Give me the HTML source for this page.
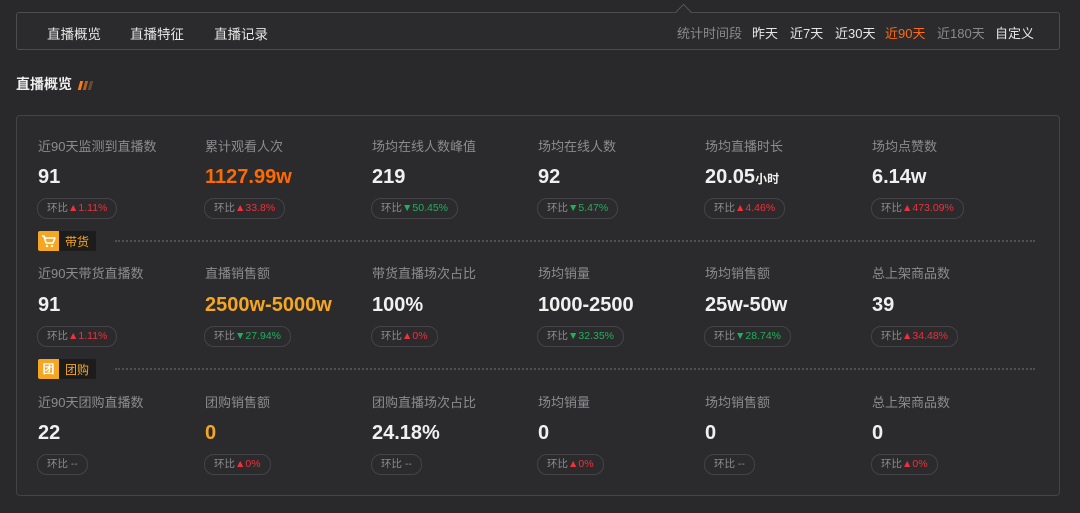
<!DOCTYPE html>
<html><head><meta charset="utf-8"><style>
*{margin:0;padding:0;box-sizing:border-box}
body{width:1080px;height:513px;background:#29292b;font-family:"Liberation Sans","Noto Sans CJK SC",sans-serif;position:relative;overflow:hidden;color:#e8e8e8}
.nav{position:absolute;left:16px;top:12px;width:1044px;height:38px;border:1px solid #4c4c4f;border-radius:3px;background:#2b2b2d}
.nav .l{position:absolute;top:10px;font-size:13.5px;color:#e6e6e6}
.nav .r{position:absolute;top:10px;font-size:13px}
.caret{position:absolute;left:661px;top:-7px;width:11px;height:11px;border-left:1.5px solid #55555a;border-top:1.5px solid #55555a;background:#2b2b2d;transform:rotate(45deg)}
.title{position:absolute;left:16px;top:74px;font-size:14px;font-weight:bold;color:#eee}
.bars{position:absolute;left:79px;top:77px}
.bars i{display:inline-block;width:3px;height:9px;margin-right:2px;transform:skewX(-15deg)}
.card{position:absolute;left:16px;top:115px;width:1044px;height:381px;border:1px solid #444447;border-radius:4px;background:#2b2b2d}
.lab{position:absolute;font-size:13px;color:#8c8c8f}
.val{position:absolute;font-size:20px;font-weight:bold;color:#f0f0f0}
.val small{font-size:12px}
.bdg{position:absolute;height:21px;border:1px solid #444447;border-radius:10px;font-size:10.5px;color:#8c8c8f;line-height:19px;padding:0 9px;white-space:nowrap}
.up{color:#f0303a}.dn{color:#1fb05a}
.tag{position:absolute;left:38px;width:58px;height:20px;background:#1c1c1d;border-radius:2px}
.tag b{position:absolute;left:0;top:0;width:21px;height:20px;background:#f5a623;border-radius:2px 0 0 2px;color:#fff;font-size:12px;text-align:center;line-height:20px}
.tag b svg{position:absolute;left:3px;top:3px}
.tag span{position:absolute;left:27px;top:2px;font-size:12px;color:#f5a623}
.dash{position:absolute;left:115px;width:920px;border-top:2px dotted #505053}
</style></head><body>
<div class="nav">
<div class="caret"></div>
<span class="l" style="left:30px">直播概览</span>
<span class="l" style="left:113px">直播特征</span>
<span class="l" style="left:197px">直播记录</span>
<span class="r" style="left:660px;color:#8a8a8d">统计时间段</span>
<span class="r" style="left:735px;color:#e6e6e6">昨天</span>
<span class="r" style="left:773px;color:#e6e6e6">近7天</span>
<span class="r" style="left:818px;color:#e6e6e6">近30天</span>
<span class="r" style="left:868px;color:#ff6a10">近90天</span>
<span class="r" style="left:920px;color:#8a8a8d">近180天</span>
<span class="r" style="left:978px;color:#e6e6e6">自定义</span>
</div>
<div class="title">直播概览</div>
<div class="bars"><i style="background:#ff7a10"></i><i style="background:#b06020"></i><i style="background:#6a4a30"></i></div>
<div class="card"></div>

<div class="lab" style="left:38px;top:136px">近90天监测到直播数</div>
<div class="lab" style="left:205px;top:136px">累计观看人次</div>
<div class="lab" style="left:372px;top:136px">场均在线人数峰值</div>
<div class="lab" style="left:538px;top:136px">场均在线人数</div>
<div class="lab" style="left:705px;top:136px">场均直播时长</div>
<div class="lab" style="left:872px;top:136px">场均点赞数</div>
<div class="val" style="left:38px;top:166px">91</div>
<div class="val" style="left:205px;top:166px;color:#ff6a00">1127.99w</div>
<div class="val" style="left:372px;top:166px">219</div>
<div class="val" style="left:538px;top:166px">92</div>
<div class="val" style="left:705px;top:166px">20.05<small>小时</small></div>
<div class="val" style="left:872px;top:166px">6.14w</div>
<div class="bdg" style="left:37px;top:198px">环比<span class="up">▲1.11%</span></div>
<div class="bdg" style="left:204px;top:198px">环比<span class="up">▲33.8%</span></div>
<div class="bdg" style="left:371px;top:198px">环比<span class="dn">▼50.45%</span></div>
<div class="bdg" style="left:537px;top:198px">环比<span class="dn">▼5.47%</span></div>
<div class="bdg" style="left:704px;top:198px">环比<span class="up">▲4.46%</span></div>
<div class="bdg" style="left:871px;top:198px">环比<span class="up">▲473.09%</span></div>

<div class="tag" style="top:231px"><b><svg width="15" height="14" viewBox="0 0 15 14"><path d="M1 2h2l2 7h7l2-5H4" fill="none" stroke="#fff" stroke-width="1.6" stroke-linejoin="round"/><circle cx="6" cy="12" r="1.2" fill="#fff"/><circle cx="11" cy="12" r="1.2" fill="#fff"/></svg></b><span>带货</span></div>
<div class="dash" style="top:240px"></div>

<div class="lab" style="left:38px;top:263px">近90天带货直播数</div>
<div class="lab" style="left:205px;top:263px">直播销售额</div>
<div class="lab" style="left:372px;top:263px">带货直播场次占比</div>
<div class="lab" style="left:538px;top:263px">场均销量</div>
<div class="lab" style="left:705px;top:263px">场均销售额</div>
<div class="lab" style="left:872px;top:263px">总上架商品数</div>
<div class="val" style="left:38px;top:294px">91</div>
<div class="val" style="left:205px;top:294px;color:#f5a623">2500w-5000w</div>
<div class="val" style="left:372px;top:294px">100%</div>
<div class="val" style="left:538px;top:294px">1000-2500</div>
<div class="val" style="left:705px;top:294px">25w-50w</div>
<div class="val" style="left:872px;top:294px">39</div>
<div class="bdg" style="left:37px;top:326px">环比<span class="up">▲1.11%</span></div>
<div class="bdg" style="left:204px;top:326px">环比<span class="dn">▼27.94%</span></div>
<div class="bdg" style="left:371px;top:326px">环比<span class="up">▲0%</span></div>
<div class="bdg" style="left:537px;top:326px">环比<span class="dn">▼32.35%</span></div>
<div class="bdg" style="left:704px;top:326px">环比<span class="dn">▼28.74%</span></div>
<div class="bdg" style="left:871px;top:326px">环比<span class="up">▲34.48%</span></div>

<div class="tag" style="top:359px"><b>团</b><span>团购</span></div>
<div class="dash" style="top:368px"></div>

<div class="lab" style="left:38px;top:392px">近90天团购直播数</div>
<div class="lab" style="left:205px;top:392px">团购销售额</div>
<div class="lab" style="left:372px;top:392px">团购直播场次占比</div>
<div class="lab" style="left:538px;top:392px">场均销量</div>
<div class="lab" style="left:705px;top:392px">场均销售额</div>
<div class="lab" style="left:872px;top:392px">总上架商品数</div>
<div class="val" style="left:38px;top:422px">22</div>
<div class="val" style="left:205px;top:422px;color:#f5a623">0</div>
<div class="val" style="left:372px;top:422px">24.18%</div>
<div class="val" style="left:538px;top:422px">0</div>
<div class="val" style="left:705px;top:422px">0</div>
<div class="val" style="left:872px;top:422px">0</div>
<div class="bdg" style="left:37px;top:454px">环比 --</div>
<div class="bdg" style="left:204px;top:454px">环比<span class="up">▲0%</span></div>
<div class="bdg" style="left:371px;top:454px">环比 --</div>
<div class="bdg" style="left:537px;top:454px">环比<span class="up">▲0%</span></div>
<div class="bdg" style="left:704px;top:454px">环比 --</div>
<div class="bdg" style="left:871px;top:454px">环比<span class="up">▲0%</span></div>
</body></html>
